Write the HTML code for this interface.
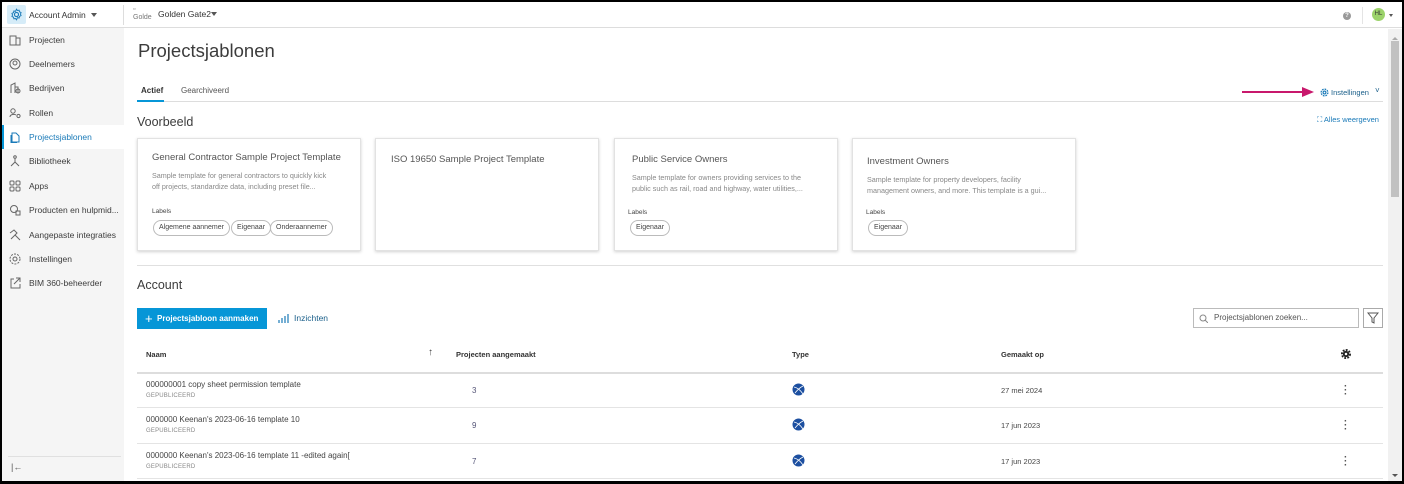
<!DOCTYPE html>
<html><head><meta charset="utf-8"><style>
*{box-sizing:border-box;margin:0;padding:0}
body{width:1404px;height:484px;background:#000;font-family:"Liberation Sans",sans-serif;overflow:hidden;position:relative}
.f{position:absolute;left:2px;top:2px;width:1400px;height:479px;background:#fff;overflow:hidden}
.a{position:absolute;white-space:nowrap}
.side{position:absolute;left:0;top:26px;width:122px;height:453px;background:#f5f5f5}
.si{position:absolute;left:0;width:122px;height:24px;font-size:8.5px;color:#3c3c3c;padding-left:27px;line-height:24px;white-space:nowrap;overflow:hidden}
.si svg{position:absolute;left:7px;top:6px}
.card{position:absolute;top:136px;width:224px;height:113px;border:1px solid #e2e2e2;box-shadow:0 1px 3px rgba(0,0,0,.18);background:#fff}
.ct{position:absolute;left:14px;font-size:9.5px;color:#555;white-space:nowrap}
.cd{position:absolute;left:14px;font-size:7.2px;color:#888;line-height:11px;white-space:nowrap}
.lb{position:absolute;font-size:6.5px;color:#444}
.chip{position:absolute;top:81px;height:16px;border:1px solid #bbb;border-radius:8px;font-size:7px;color:#444;line-height:14px;padding:0 5px;white-space:nowrap}
.hd{position:absolute;top:348px;font-size:7.5px;font-weight:bold;color:#333;white-space:nowrap}
.row{position:absolute;left:135px;width:1246px;height:1px;background:#e4e4e4}
.nm{position:absolute;left:144px;font-size:8px;color:#444;white-space:nowrap}
.pb{position:absolute;left:144px;font-size:6px;color:#888;letter-spacing:.2px}
.n{position:absolute;left:470px;font-size:8px;color:#557}
.dt{position:absolute;left:999px;font-size:7.5px;color:#444;white-space:nowrap}
.dots{position:absolute;left:1342px;font-size:10px;color:#555;font-weight:bold;line-height:4px;width:4px}
.gl{position:absolute;left:790px}
</style></head><body><div class="f">
<div class="a" style="left:0;top:0;width:1400px;height:26px;border-bottom:1px solid #ddd;background:#fff"></div>
<div class="a" style="left:5px;top:3px;width:19px;height:19px;background:#d6ecf8;border-radius:2px"></div>
<svg class="a" style="left:8px;top:6px" width="13" height="13" viewBox="0 0 16 16"><circle cx="8" cy="8" r="2.5" fill="none" stroke="#1a7ab8" stroke-width="1.4"/><path d="M8 1.5l1.2 1.6 2-.4.5 2 1.9.9-.7 1.9.7 1.9-1.9.9-.5 2-2-.4L8 14.5l-1.2-1.6-2 .4-.5-2-1.9-.9.7-1.9-.7-1.9 1.9-.9.5-2 2 .4z" fill="none" stroke="#1a7ab8" stroke-width="1.2"/></svg>
<div class="a" style="left:27px;top:8px;font-size:8.5px;color:#333">Account Admin</div>
<div class="a" style="left:89px;top:11px;border:3px solid transparent;border-top:4px solid #555"></div>
<div class="a" style="left:121px;top:3px;width:1px;height:20px;background:#ddd"></div>
<div class="a" style="left:131px;top:4px;font-size:7px;color:#777;line-height:8px">▫<br>Golde</div>
<div class="a" style="left:156px;top:7px;font-size:8.5px;color:#333">Golden Gate2</div>
<div class="a" style="left:209px;top:10px;border:3px solid transparent;border-top:4px solid #555"></div>
<div class="a" style="left:1341px;top:10px;width:8px;height:8px;border-radius:50%;background:#999;color:#fff;font-size:6px;text-align:center;line-height:8px;font-weight:bold">?</div>
<div class="a" style="left:1360px;top:5px;width:1px;height:17px;background:#e4e4e4"></div>
<div class="a" style="left:1370px;top:6px;width:13px;height:13px;border-radius:50%;background:#9cd36b;font-size:6px;text-align:center;line-height:13px;color:#333">HL</div>
<div class="a" style="left:1387px;top:12px;border:2.5px solid transparent;border-top:3px solid #555"></div>
<div class="side">
<div class="si" style="top:0">Projecten<svg width="12" height="12"><rect x="1" y="2" width="6" height="9" fill="none" stroke="#666"/><rect x="7" y="4" width="4" height="7" fill="none" stroke="#666"/></svg></div>
<div class="si" style="top:24px">Deelnemers<svg width="12" height="12"><circle cx="6" cy="6" r="5" fill="none" stroke="#666"/><circle cx="6" cy="5" r="2" fill="none" stroke="#666"/></svg></div>
<div class="si" style="top:48px">Bedrijven<svg width="12" height="12"><path d="M2 11V3l4-2v10M6 5h3v6" fill="none" stroke="#666"/><circle cx="9" cy="9" r="2" fill="none" stroke="#666"/></svg></div>
<div class="si" style="top:73px">Rollen<svg width="12" height="12"><circle cx="4" cy="4" r="2.2" fill="none" stroke="#666"/><path d="M1 10c0-3 5-3 6-2" fill="none" stroke="#666"/><circle cx="9.5" cy="9" r="1.6" fill="none" stroke="#666"/></svg></div>
<div class="si" style="top:97px;background:#fff;color:#1a7ab8"><div class="a" style="left:0;top:0;width:2px;height:24px;background:#0696d7"></div>Projectsjablonen<svg width="12" height="12"><path d="M3 2h4l3 3v6H3z" fill="none" stroke="#1a7ab8"/><path d="M2 4v8h6" fill="none" stroke="#1a7ab8"/></svg></div>
<div class="si" style="top:121px">Bibliotheek<svg width="12" height="12"><circle cx="6" cy="2" r="1.3" fill="none" stroke="#666"/><path d="M6 3v4L2 11M6 7l4 4" fill="none" stroke="#666"/></svg></div>
<div class="si" style="top:146px">Apps<svg width="12" height="12"><rect x="1" y="1" width="4" height="4" rx="1" fill="none" stroke="#666"/><rect x="7" y="1" width="4" height="4" rx="1" fill="none" stroke="#666"/><rect x="1" y="7" width="4" height="4" rx="1" fill="none" stroke="#666"/><rect x="7" y="7" width="4" height="4" rx="1" fill="none" stroke="#666"/></svg></div>
<div class="si" style="top:170px">Producten en hulpmid...<svg width="12" height="12"><circle cx="5" cy="5" r="3.5" fill="none" stroke="#666"/><rect x="7" y="7" width="4" height="4" fill="none" stroke="#666"/></svg></div>
<div class="si" style="top:195px">Aangepaste integraties<svg width="12" height="12"><path d="M1 4l4-3 3 3-6 6M6 6l5 5" fill="none" stroke="#666"/></svg></div>
<div class="si" style="top:219px">Instellingen<svg width="12" height="12"><circle cx="6" cy="6" r="2" fill="none" stroke="#666"/><circle cx="6" cy="6" r="5" fill="none" stroke="#666" stroke-dasharray="2 1.2"/></svg></div>
<div class="si" style="top:243px">BIM 360-beheerder<svg width="12" height="12"><path d="M5 2H2v9h9V7M7 1h4v4M11 1L5 7" fill="none" stroke="#666"/></svg></div>
<div class="a" style="left:6px;top:428px;width:113px;height:1px;background:#e0e0e0"></div>
<div class="a" style="left:9px;top:434px;font-size:9px;color:#555">|←</div>
</div>
<div class="a" style="left:136px;top:38px;font-size:18.5px;color:#3c3c3c">Projectsjablonen</div>
<div class="a" style="left:139px;top:84px;font-size:8px;color:#333;font-weight:bold">Actief</div>
<div class="a" style="left:179px;top:84px;font-size:8px;color:#555">Gearchiveerd</div>
<div class="a" style="left:135px;top:99px;width:1246px;height:1px;background:#ddd"></div>
<div class="a" style="left:135px;top:98px;width:27px;height:2px;background:#0696d7"></div>
<div class="a" style="left:1240px;top:89px;width:60px;height:2px;background:#c8186c"></div>
<div class="a" style="left:1300px;top:85px;border-top:5px solid transparent;border-bottom:5px solid transparent;border-left:12px solid #c8186c"></div>
<svg class="a" style="left:1318px;top:86px" width="9" height="9" viewBox="0 0 16 16"><circle cx="8" cy="8" r="2.5" fill="none" stroke="#1a7ab8" stroke-width="2"/><circle cx="8" cy="8" r="6" fill="none" stroke="#1a7ab8" stroke-width="2.2" stroke-dasharray="3 1.7"/></svg>
<div class="a" style="left:1329px;top:86px;font-size:7.5px;color:#1a5f8a">Instellingen</div>
<div class="a" style="left:1373px;top:84px;font-size:8px;color:#1a5f8a">˅</div>
<div class="a" style="left:135px;top:113px;font-size:12.5px;color:#3c3c3c">Voorbeeld</div>
<div class="a" style="left:1315px;top:113px;font-size:7.5px;color:#1a7ab8">⛶ Alles weergeven</div>
<div class="card" style="left:135px"><div class="ct" style="top:13px">General Contractor Sample Project Template</div><div class="cd" style="top:31px">Sample template for general contractors to quickly kick<br>off projects, standardize data, including preset file...</div><div class="lb" style="left:14px;top:69px">Labels</div><div class="chip" style="left:15px">Algemene aannemer</div><div class="chip" style="left:93px">Eigenaar</div><div class="chip" style="left:132px">Onderaannemer</div></div>
<div class="card" style="left:373px"><div class="ct" style="top:15px;left:15px">ISO 19650 Sample Project Template</div></div>
<div class="card" style="left:612px"><div class="ct" style="top:15px;left:17px">Public Service Owners</div><div class="cd" style="top:33px;left:17px">Sample template for owners providing services to the<br>public such as rail, road and highway, water utilities,...</div><div class="lb" style="left:13px;top:70px">Labels</div><div class="chip" style="left:15px">Eigenaar</div></div>
<div class="card" style="left:850px"><div class="ct" style="top:17px;left:14px">Investment Owners</div><div class="cd" style="top:35px;left:14px">Sample template for property developers, facility<br>management owners, and more. This template is a gui...</div><div class="lb" style="left:13px;top:70px">Labels</div><div class="chip" style="left:15px">Eigenaar</div></div>
<div class="a" style="left:135px;top:263px;width:1246px;height:1px;background:#e0e0e0"></div>
<div class="a" style="left:135px;top:276px;font-size:12.5px;color:#3c3c3c">Account</div>
<div class="a" style="left:135px;top:306px;width:130px;height:21px;background:#0696d7;color:#fff;font-size:8px;font-weight:bold;line-height:21px;padding-left:8px"><span style="font-size:13px;font-weight:normal;vertical-align:-2px">+</span>&nbsp; Projectsjabloon aanmaken</div>
<svg class="a" style="left:276px;top:311px" width="11" height="11"><path d="M1 10V7M4 10V5M7 10V3M10 10V1" stroke="#1a7ab8" stroke-width="1.2"/></svg>
<div class="a" style="left:292px;top:311px;font-size:8.5px;color:#1a5f8a">Inzichten</div>
<div class="a" style="left:1191px;top:306px;width:166px;height:20px;border:1px solid #bbb;font-size:8px;color:#555;line-height:18px;padding-left:20px">Projectsjablonen zoeken...</div>
<svg class="a" style="left:1197px;top:312px" width="9" height="9"><circle cx="4" cy="4" r="3" fill="none" stroke="#888"/><path d="M6 6l3 3" stroke="#888"/></svg>
<div class="a" style="left:1361px;top:306px;width:20px;height:20px;border:1px solid #aaa"></div>
<svg class="a" style="left:1365px;top:310px" width="12" height="12"><path d="M1 1h10L7 6v5L5 10V6z" fill="none" stroke="#555"/></svg>
<div class="hd" style="left:144px">Naam</div><div class="a" style="left:426px;top:345px;font-size:10px;color:#444">↑</div>
<div class="hd" style="left:454px">Projecten aangemaakt</div><div class="hd" style="left:790px">Type</div><div class="hd" style="left:999px">Gemaakt op</div>
<svg class="a" style="left:1339px;top:347px" width="10" height="10" viewBox="0 0 16 16"><circle cx="8" cy="8" r="5" fill="#222"/><circle cx="8" cy="8" r="6.5" fill="none" stroke="#222" stroke-width="3" stroke-dasharray="3 2"/><circle cx="8" cy="8" r="2" fill="#fff"/></svg>
<div class="row" style="top:370px;height:1.5px;background:#ddd"></div>
<div class="nm" style="top:378px">000000001 copy sheet permission template</div><div class="pb" style="top:391px">GEPUBLICEERD</div><div class="n" style="top:384px">3</div>
<svg class="gl" style="top:381px" width="13" height="13"><circle cx="6.5" cy="6.5" r="6" fill="#1c4fa0"/><path d="M2 4q5 1 9 7M3 10q4-5 8-7" stroke="#fff" stroke-width=".8" fill="none"/></svg>
<div class="dt" style="top:384px">27 mei 2024</div><div class="dots" style="top:383px">·<br>·<br>·</div>
<div class="row" style="top:405px"></div>
<div class="nm" style="top:413px">0000000 Keenan's 2023-06-16 template 10</div><div class="pb" style="top:426px">GEPUBLICEERD</div><div class="n" style="top:419px">9</div>
<svg class="gl" style="top:416px" width="13" height="13"><circle cx="6.5" cy="6.5" r="6" fill="#1c4fa0"/><path d="M2 4q5 1 9 7M3 10q4-5 8-7" stroke="#fff" stroke-width=".8" fill="none"/></svg>
<div class="dt" style="top:419px">17 jun 2023</div><div class="dots" style="top:418px">·<br>·<br>·</div>
<div class="row" style="top:441px"></div>
<div class="nm" style="top:449px">0000000 Keenan's 2023-06-16 template 11 -edited again[</div><div class="pb" style="top:462px">GEPUBLICEERD</div><div class="n" style="top:455px">7</div>
<svg class="gl" style="top:452px" width="13" height="13"><circle cx="6.5" cy="6.5" r="6" fill="#1c4fa0"/><path d="M2 4q5 1 9 7M3 10q4-5 8-7" stroke="#fff" stroke-width=".8" fill="none"/></svg>
<div class="dt" style="top:455px">17 jun 2023</div><div class="dots" style="top:454px">·<br>·<br>·</div>
<div class="row" style="top:476px"></div>
<div class="a" style="left:1386px;top:27px;width:14px;height:452px;background:#f1f1f1"></div>
<div class="a" style="left:1389px;top:39px;width:8px;height:156px;background:#c1c1c1"></div>
<div class="a" style="left:1390px;top:32px;border:3px solid transparent;border-bottom:3px solid #aaa"></div>
<div class="a" style="left:1390px;top:472px;border:3px solid transparent;border-top:3px solid #555"></div>
</div></body></html>
